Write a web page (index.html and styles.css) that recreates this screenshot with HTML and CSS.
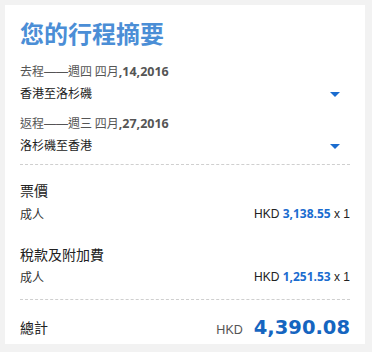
FILE: index.html
```html
<!DOCTYPE html>
<html lang="zh-Hant">
<head>
<meta charset="utf-8">
<link rel="stylesheet" href="styles.css">
</head>
<body>
<div class="card">
  <h1 class="title">您的行程摘要</h1>
  <div class="leg leg-out">
    <div class="leg-date">去程<span class="dash">——</span>週四 四月<b>,14,2016</b></div>
    <div class="leg-route"><span>香港至洛杉磯</span><span class="caret"></span></div>
  </div>
  <div class="leg leg-back">
    <div class="leg-date">返程<span class="dash">——</span>週三 四月<b>,27,2016</b></div>
    <div class="leg-route"><span>洛杉磯至香港</span><span class="caret"></span></div>
  </div>
  <div class="divider divider-top"></div>
  <div class="section sec-fare">
    <div class="sec-title">票價</div>
    <div class="row"><span>成人</span><span class="price">HKD <b>3,138.55</b> x 1</span></div>
  </div>
  <div class="section sec-tax">
    <div class="sec-title">稅款及附加費</div>
    <div class="row"><span>成人</span><span class="price">HKD <b>1,251.53</b> x 1</span></div>
  </div>
  <div class="divider divider-bottom"></div>
  <div class="total">
    <span class="total-label">總計</span>
    <span class="total-amt"><span class="cur">HKD</span><b>4,390.08</b></span>
  </div>
</div>
</body>
</html>
```
FILE: styles.css
```css
html, body { margin: 0; padding: 0; }
body {
  background: #f2f2f2;
  font-family: "Open Sans", "Noto Sans CJK TC", sans-serif;
  color: #333;
  padding: 5px;
  width: 360px;
}
.card {
  background: #fff;
  padding: 11px 15px 0 15px;
  height: 339px;
  box-sizing: border-box;
}
.title {
  margin: 0;
  font-size: 24px;
  line-height: 34px;
  font-weight: 700;
  color: #4b8ed6;
  font-family: "Noto Sans CJK TC", sans-serif;
}
.leg-out { margin-top: 11px; }
.leg-back { margin-top: 9px; }
.leg-date {
  font-size: 12px;
  line-height: 20px;
  color: #555;
  font-family: "Noto Sans CJK TC", sans-serif;
}
.dash { font-family: "Liberation Sans", sans-serif; }
.leg-date b {
  font-family: "Open Sans", sans-serif;
  font-weight: 700;
  font-size: 12.5px;
}
.leg-route {
  display: flex;
  justify-content: space-between;
  align-items: center;
  font-size: 12px;
  line-height: 22px;
  color: #222;
  padding-right: 10px;
  font-family: "Noto Sans CJK TC", sans-serif;
}
.caret {
  width: 0; height: 0;
  border-left: 5px solid transparent;
  border-right: 5px solid transparent;
  border-top: 5px solid #1a6ccf;
  margin-top: 3px;
}
.divider { border-top: 1px dashed #cfcfcf; }
.divider-top { margin-top: 8px; }
.divider-bottom { margin-top: 12px; }
.sec-fare { margin-top: 14px; }
.sec-tax { margin-top: 19px; }
.sec-title {
  font-size: 14px;
  line-height: 22px;
  color: #222;
  font-family: "Noto Sans CJK TC", sans-serif;
}
.row {
  display: flex;
  justify-content: space-between;
  align-items: center;
  font-size: 12px;
  line-height: 20px;
  color: #333;
  margin-top: 3px;
  font-family: "Noto Sans CJK TC", sans-serif;
}
.sec-tax .row { margin-top: 2px; }
.price { font-family: "Liberation Sans", sans-serif; font-size: 12px; color: #222; }
.price b { color: #1a6ccf; font-family: "Open Sans", sans-serif; font-weight: 700; font-size: 12px; }
.total {
  display: flex;
  justify-content: space-between;
  align-items: center;
  height: 34px;
  margin-top: 10px;
}
.total-label { font-size: 14px; color: #222; font-family: "Noto Sans CJK TC", sans-serif; }
.total-amt { display: flex; align-items: baseline; }
.cur { font-family: "Liberation Sans", sans-serif; font-size: 12.5px; color: #555; margin-right: 11px; }
.total-amt b {
  font-size: 19.5px;
  color: #1565c0;
  font-family: "DejaVu Sans", sans-serif;
  font-weight: 700;
}
```
